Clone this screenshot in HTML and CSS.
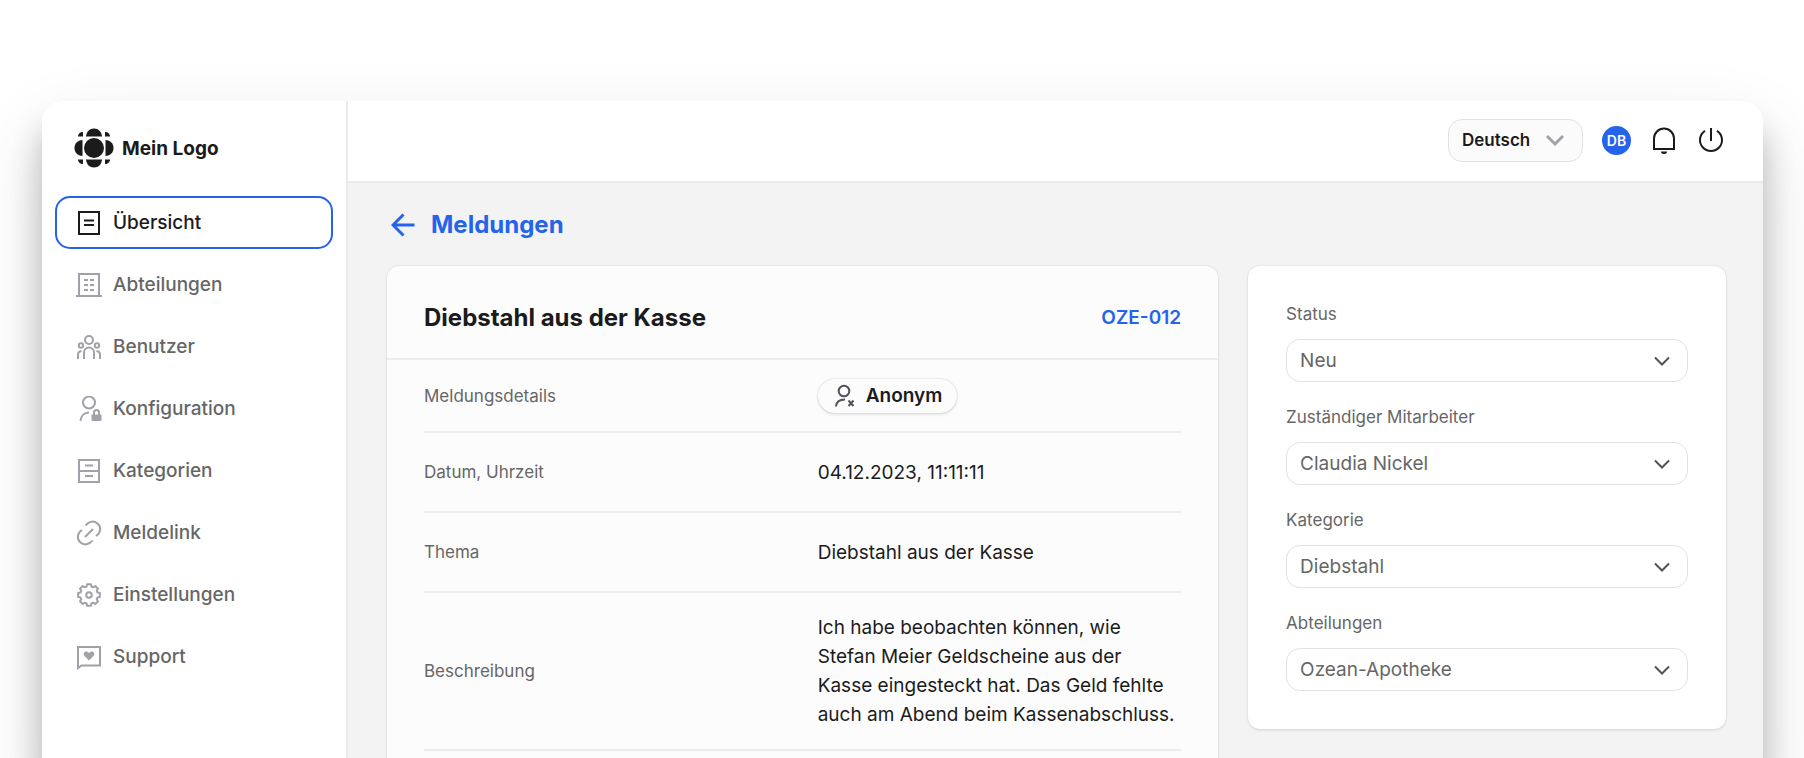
FILE: index.html
```html
<!DOCTYPE html>
<html lang="de">
<head>
<meta charset="utf-8">
<meta name="viewport" content="width=device-width, initial-scale=1">
<title>Meldungen – Diebstahl aus der Kasse</title>
<link rel="stylesheet" href="styles.css">
</head>
<body>
<div class="window">
  <aside class="sidebar">
    <div class="logo">
      <svg class="logo-mark" viewBox="0 0 40 40" aria-hidden="true">
        <circle cx="20" cy="20" r="10"/>
        <path d="M12 8.500C12.500 3.500 15.500.5 20 .5S27.500 3.500 28 8.500z"/>
        <path d="M12 31.500C12.500 36.500 15.500 39.500 20 39.500S27.500 36.500 28 31.500z"/>
        <path d="M8.500 12C3.500 12.500.5 15.500.5 20S3.500 27.500 8.500 28z"/>
        <path d="M31.500 12C36.500 12.500 39.500 15.500 39.500 20S36.500 27.500 31.500 28z"/>
        <path d="M9 4V8.500H4C4 6 6 4 9 4zM31 4V8.500H36C36 6 34 4 31 4zM9 36V31.500H4C4 34 6 36 9 36zM31 36V31.500H36C36 34 34 36 31 36z"/>
      </svg>
      <span>Mein Logo</span>
    </div>
    <nav class="nav">
      <a class="nav-item active" href="#" aria-current="page">
        <svg class="icon" viewBox="0 0 26 26" aria-hidden="true"><path d="M3 2h20v22H3zM8 10.500h10M8 15h10"/></svg>
        Übersicht
      </a>
      <a class="nav-item" href="#">
        <svg class="icon" viewBox="0 0 26 26" aria-hidden="true"><path d="M3 23.500V2h20v21.500M0 24h26M8 8h4M14 8h4M8 13h4M14 13h4M8 18h4M14 18h4"/></svg>
        Abteilungen
      </a>
      <a class="nav-item" href="#">
        <svg class="icon" viewBox="0 0 26 26" aria-hidden="true"><circle cx="13" cy="6" r="4"/><circle cx="5" cy="11.500" r="2.200"/><circle cx="21" cy="11.500" r="2.200"/><path d="M8 25v-6.500a5 5 0 0 1 10 0V25M2 25v-4.500q0-3 3.500-3.500M24 25v-4.500q0-3-3.500-3.500"/></svg>
        Benutzer
      </a>
      <a class="nav-item" href="#">
        <svg class="icon" viewBox="0 0 26 26" aria-hidden="true"><circle cx="13" cy="6.500" r="6"/><path d="M4.500 25c.3-5 3.700-8.300 8.500-8.500M18 19v-2.500a2.500 2.500 0 0 1 5 0V19"/><path class="solid" d="M15.500 18.500h10V25h-10z"/></svg>
        Konfiguration
      </a>
      <a class="nav-item" href="#">
        <svg class="icon" viewBox="0 0 26 26" aria-hidden="true"><path d="M3 2h20v22H3zM3 13h20M9 7.500h8M9 18h8"/></svg>
        Kategorien
      </a>
      <a class="nav-item" href="#">
        <svg class="icon" viewBox="0 0 26 26" aria-hidden="true"><path d="M9.500 5.500C13 1 18 .5 21.500 3.500C25.500 7 25 13 20 16M16.500 20.500C13 25 8 25.500 4.500 22.500C.5 19 1 13 6 10M9 17l8-8"/></svg>
        Meldelink
      </a>
      <a class="nav-item" href="#">
        <svg class="icon" viewBox="-13 -13 26 26" aria-hidden="true"><path stroke-linejoin="round" d="M8.460-2.430L10.830-1.910V1.910L8.460 2.430L7.700 4.260L9.010 6.310L6.310 9.010L4.260 7.700L2.430 8.460L1.910 10.830H-1.910L-2.430 8.460L-4.260 7.700L-6.310 9.010L-9.010 6.310L-7.700 4.260L-8.460 2.430L-10.830 1.910V-1.910L-8.460-2.430L-7.700-4.260L-9.010-6.310L-6.310-9.010L-4.260-7.700L-2.430-8.460L-1.910-10.830H1.910L2.430-8.460L4.260-7.700L6.310-9.010L9.010-6.310L7.700-4.260z"/><circle r="2.800"/></svg>
        Einstellungen
      </a>
      <a class="nav-item" href="#">
        <svg class="icon" viewBox="0 0 26 26" aria-hidden="true"><path d="M2 24V3h22v18.500H5.500z"/><path class="solid" d="M13 16.500L8.500 12C6.500 9.500 8.500 7.500 10.500 7.500Q12 7.500 13 9Q14 7.500 15.500 7.500C17.500 7.500 19.500 9.500 17.500 12z"/></svg>
        Support
      </a>
    </nav>
  </aside>

  <div class="content">
    <header class="topbar">
      <div class="select language">
        <select aria-label="Sprache"><option>Deutsch</option><option>English</option></select>
        <svg class="chevron" viewBox="0 0 18 18" aria-hidden="true"><path d="M1 5l8 8 8-8"/></svg>
      </div>
      <button class="avatar" type="button" aria-label="Profil DB">DB</button>
      <button class="icon-button" type="button" aria-label="Benachrichtigungen">
        <svg viewBox="0 0 28 28" aria-hidden="true"><path d="M4 23V12.500a10 10 0 0 1 20 0V23z"/><path class="solid" d="M11 25.500h6a3 2.500 0 0 1-6 0z"/></svg>
      </button>
      <button class="icon-button" type="button" aria-label="Abmelden">
        <svg viewBox="0 0 28 28" aria-hidden="true"><path d="M14 2v13M8 4.800a11 11 0 1 0 12 0"/></svg>
      </button>
    </header>

    <main class="page">
      <a class="back" href="#">
        <svg viewBox="0 0 24 24" aria-hidden="true"><path d="M23.500 12H2.500M12.500 1.500L2 12 12.500 22.500"/></svg>
        Meldungen
      </a>
      <div class="columns">
        <article class="card report">
          <header class="report-head">
            <h1>Diebstahl aus der Kasse</h1>
            <a href="#">OZE-012</a>
          </header>
          <dl class="details">
            <div class="row row-short">
              <dt>Meldungsdetails</dt>
              <dd>
                <span class="pill">
                  <svg viewBox="0 0 22 24" aria-hidden="true"><circle cx="10" cy="7" r="5.300"/><path d="M2 22.500c.3-5 3.500-7 9-7"/><path class="cross" d="M14.500 16.500l5 5.500M19.500 16.500l-5 5.500"/></svg>
                  Anonym
                </span>
              </dd>
            </div>
            <div class="row"><dt>Datum, Uhrzeit</dt><dd>04.12.2023, 11:11:11</dd></div>
            <div class="row"><dt>Thema</dt><dd>Diebstahl aus der Kasse</dd></div>
            <div class="row"><dt>Beschreibung</dt><dd>Ich habe beobachten können, wie Stefan Meier Geldscheine aus der Kasse eingesteckt hat. Das Geld fehlte auch am Abend beim Kassenabschluss.</dd></div>
          </dl>
        </article>

        <form class="card filters">
          <div class="field">
            <label for="status">Status</label>
            <div class="select">
              <select id="status"><option>Neu</option></select>
              <svg class="chevron" viewBox="0 0 18 18" aria-hidden="true"><path d="M2 5.500l7 7 7-7"/></svg>
            </div>
          </div>
          <div class="field">
            <label for="assignee">Zuständiger Mitarbeiter</label>
            <div class="select">
              <select id="assignee"><option>Claudia Nickel</option></select>
              <svg class="chevron" viewBox="0 0 18 18" aria-hidden="true"><path d="M2 5.500l7 7 7-7"/></svg>
            </div>
          </div>
          <div class="field">
            <label for="category">Kategorie</label>
            <div class="select">
              <select id="category"><option>Diebstahl</option></select>
              <svg class="chevron" viewBox="0 0 18 18" aria-hidden="true"><path d="M2 5.500l7 7 7-7"/></svg>
            </div>
          </div>
          <div class="field">
            <label for="department">Abteilungen</label>
            <div class="select">
              <select id="department"><option>Ozean-Apotheke</option></select>
              <svg class="chevron" viewBox="0 0 18 18" aria-hidden="true"><path d="M2 5.500l7 7 7-7"/></svg>
            </div>
          </div>
        </form>
      </div>
    </main>
  </div>
</div>
</body>
</html>
```
FILE: styles.css
```css
:root {
  --blue: #2563eb;
  --ink: #1b1b1b;
  --muted: #666;
  --icon: #a1a1aa;
  --line: #ededed;
}

* { box-sizing: border-box; }

body {
  margin: 0;
  height: 100vh;
  overflow: hidden;
  padding: 101px 41px 0 42px;
  background: #fff;
  color: var(--ink);
  font-family: Inter, "Liberation Sans", sans-serif;
  font-size: 19px;
}

a { color: inherit; text-decoration: none; }

button, select { font: inherit; color: inherit; }

svg {
  fill: none;
  stroke: currentColor;
  stroke-width: 2;
}

.solid { fill: currentColor; stroke: none; }

.window {
  display: flex;
  min-height: 100%;
  border-radius: 20px 20px 0 0;
  background: #f3f3f3;
  box-shadow: 0 32px 80px rgba(0, 0, 0, .12), 0 28px 32px rgba(0, 0, 0, .24);
}

.sidebar {
  flex: none;
  width: 306px;
  padding: 27px 13px;
  background: #fff;
  border-right: 2px solid #ebebeb;
  border-radius: 20px 0 0 0;
}

.logo {
  display: flex;
  align-items: center;
  gap: 8px;
  margin-bottom: 28px;
  padding-left: 19px;
  font-weight: 700;
}

.logo-mark {
  width: 40px;
  height: 40px;
  fill: var(--ink);
  stroke: none;
}

.nav { display: grid; gap: 9px; }

.nav-item {
  display: flex;
  align-items: center;
  gap: 11px;
  height: 53px;
  padding: 0 19px;
  border: 2px solid transparent;
  border-radius: 15px;
  color: var(--muted);
  font-weight: 500;
}

.nav-item.active {
  border-color: var(--blue);
  color: var(--ink);
}

.icon {
  width: 26px;
  height: 26px;
  color: var(--icon);
}

.active .icon { color: inherit; }

.content { flex: 1; min-width: 0; }

.topbar {
  display: flex;
  justify-content: flex-end;
  align-items: center;
  gap: 19px;
  height: 82px;
  padding: 0 38px 2px;
  background: #fff;
  border-bottom: 2px solid #ebebeb;
  border-radius: 0 20px 0 0;
}

.select { position: relative; }

.select select {
  appearance: none;
  display: block;
  width: 100%;
  height: 43px;
  padding: 0 44px 0 13px;
  border: 1px solid #e2e2e2;
  border-radius: 14px;
  background: #fff;
}

.chevron {
  position: absolute;
  right: 17px;
  top: 50%;
  width: 18px;
  height: 18px;
  margin-top: -9px;
  color: #52525b;
  pointer-events: none;
}

.language select {
  width: 135px;
  background: #fbfbfb;
  font-size: 17px;
  font-weight: 600;
}

.language .chevron {
  right: 19px;
  color: var(--icon);
  stroke-width: 3;
}

.avatar {
  width: 29px;
  height: 29px;
  padding: 0;
  border: 0;
  border-radius: 50%;
  background: var(--blue);
  color: #fff;
  font-size: 14px;
  font-weight: 600;
}

.icon-button {
  display: flex;
  padding: 0;
  border: 0;
  background: none;
}

.icon-button svg { width: 28px; height: 28px; }

.page { padding: 24px 37px 0 39px; }

.back {
  display: flex;
  align-items: center;
  gap: 16px;
  width: max-content;
  margin-bottom: 24px;
  padding-left: 4px;
  color: var(--blue);
  font-size: 24px;
  font-weight: 700;
  line-height: 35px;
}

.back svg {
  width: 24px;
  height: 24px;
  stroke-width: 3;
}

.columns {
  display: grid;
  grid-template-columns: 40fr 23fr;
  gap: 30px;
  align-items: start;
}

.card {
  border-radius: 12px;
  background: #fff;
  box-shadow: 0 0 2px rgba(0, 0, 0, .16), 0 2px 3px rgba(0, 0, 0, .06);
}

.report {
  min-height: 520px;
  background: #fcfcfc;
}

.report-head {
  display: flex;
  justify-content: space-between;
  align-items: center;
  height: 94px;
  padding: 11px 37px 0;
  border-bottom: 2px solid var(--line);
}

.report-head h1 {
  margin: 0;
  font-size: 24px;
  font-weight: 700;
}

.report-head a {
  color: var(--blue);
  font-weight: 600;
}

.details { margin: 0; padding: 0 37px; }

.row {
  display: grid;
  grid-template-columns: 52fr 48fr;
  align-items: center;
  min-height: 80px;
  padding: 20px 0;
  border-bottom: 2px solid var(--line);
}

.row-short { min-height: 73px; padding: 0; }

.row dt {
  color: var(--muted);
  font-size: 17px;
}

.row dd {
  margin: 0;
  line-height: 29px;
}

.pill {
  display: inline-flex;
  align-items: center;
  gap: 10px;
  height: 34px;
  padding: 0 15px 0 16px;
  border-radius: 17px;
  font-weight: 600;
  vertical-align: middle;
  box-shadow: 0 0 2px rgba(0, 0, 0, .22), 0 2px 3px rgba(0, 0, 0, .08);
}

.pill svg {
  width: 22px;
  height: 24px;
  color: #52525b;
}

.filters {
  display: grid;
  gap: 23px;
  padding: 36px 38px 38px;
}

.field { display: grid; gap: 13px; }

.field label {
  color: var(--muted);
  font-size: 17px;
  line-height: 24px;
}

.field select { color: var(--muted); }
```
